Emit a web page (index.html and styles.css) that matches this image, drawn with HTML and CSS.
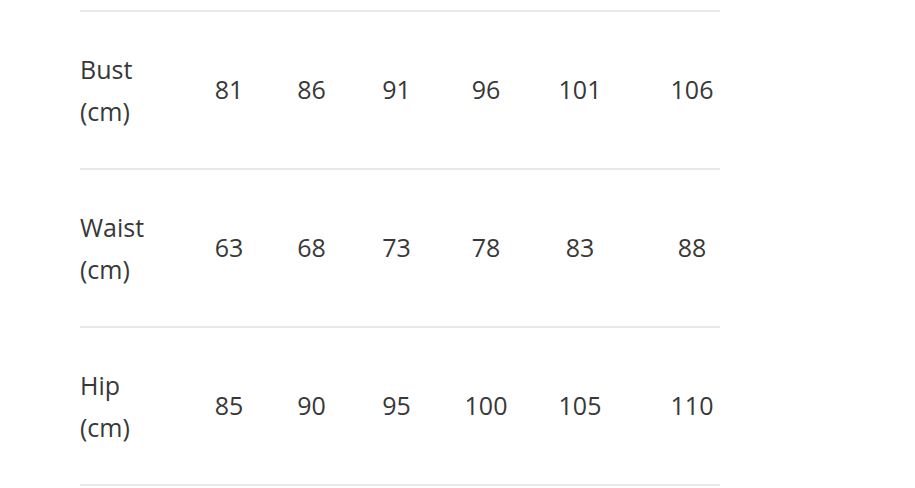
FILE: index.html
```html
<!DOCTYPE html>
<html>
<head>
<meta charset="utf-8">
<link rel="stylesheet" href="styles.css">
</head>
<body>
<div class="chart">
  <div class="row">
    <div class="label">Bust<br>(cm)</div>
    <div class="cell">81</div><div class="cell">86</div><div class="cell">91</div><div class="cell">96</div><div class="cell">101</div><div class="cell last">106</div>
  </div>
  <div class="row">
    <div class="label">Waist<br>(cm)</div>
    <div class="cell">63</div><div class="cell">68</div><div class="cell">73</div><div class="cell">78</div><div class="cell">83</div><div class="cell last">88</div>
  </div>
  <div class="row">
    <div class="label">Hip<br>(cm)</div>
    <div class="cell">85</div><div class="cell">90</div><div class="cell">95</div><div class="cell">100</div><div class="cell">105</div><div class="cell last">110</div>
  </div>
</div>
</body>
</html>
```
FILE: styles.css
```css
html, body {
  margin: 0;
  padding: 0;
  background: #ffffff;
}
body {
  font-family: "Open Sans", "Noto Sans", sans-serif;
  color: #383838;
  font-size: 25px;
}
.chart {
  width: 640px;
  margin-left: 80px;
  padding-top: 10px;
  border-bottom: 2px solid #e8e8e8;
}
.row {
  display: grid;
  grid-template-columns: 108px 82px 83px 87px 92px 96px 92px;
  align-items: center;
  height: 156px;
  border-top: 2px solid #e8e8e8;
}
.label {
  line-height: 42px;
}
.cell {
  text-align: center;
  margin-top: -2px;
}
.cell.last {
  padding-left: 36px;
}
```
